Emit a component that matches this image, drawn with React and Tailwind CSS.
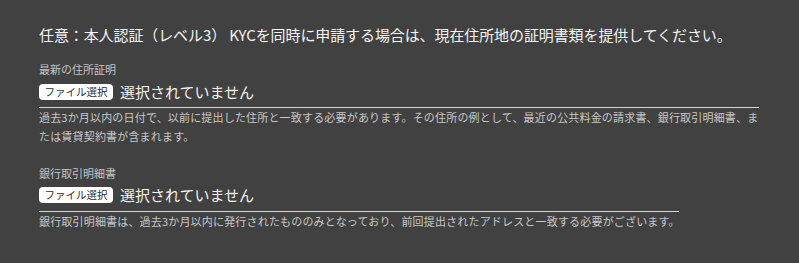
const font = { fontFamily: '"Noto Sans CJK JP", "Noto Sans", sans-serif' }

function FileField({ label, help, lineWidth, rowGap, rowPad }) {
  return (
    <div className="flex flex-col">
      <p className="text-[11px] leading-[16px] text-[#c4c4c4]">{label}</p>
      <div
        className={`flex items-center gap-[7px] border-b border-[#d6d6d6] ${lineWidth} ${rowGap} ${rowPad}`}
      >
        <span className="flex h-[16px] w-[74px] items-center justify-center rounded-[4px] bg-white text-[10.5px] leading-none text-[#2b2b2b]">
          ファイル選択
        </span>
        <span className="text-[15px] leading-[20px] text-[#f2f2f2]">選択されていません</span>
      </div>
      <p className="w-[720px] text-[11px] leading-[19px] tracking-[0.18px] text-[#c8c8c8]">{help}</p>
    </div>
  )
}

export default function App() {
  return (
    <div className="h-[263px] w-full bg-[#414141] pl-[39px] pt-[23px]" style={font}>
      <h1 className="text-[15px] leading-[24px] tracking-[-0.1px] text-[#f4f4f4]">
        任意：本人認証（レベル3） KYCを同時に申請する場合は、現在住所地の証明書類を提供してください。
      </h1>
      <div className="mt-[14px] flex flex-col gap-[19px]">
        <FileField
          label="最新の住所証明"
          help="過去3か月以内の日付で、以前に提出した住所と一致する必要があります。その住所の例として、最近の公共料金の請求書、銀行取引明細書、または賃貸契約書が含まれます。"
          lineWidth="w-[720px]"
          rowGap="mt-[5px]"
          rowPad="pb-[5px]"
        />
        <FileField
          label="銀行取引明細書"
          help="銀行取引明細書は、過去3か月以内に発行されたもののみとなっており、前回提出されたアドレスと一致する必要がございます。"
          lineWidth="w-[640px]"
          rowGap="mt-[4px]"
          rowPad="pb-[6px]"
        />
      </div>
    </div>
  )
}
